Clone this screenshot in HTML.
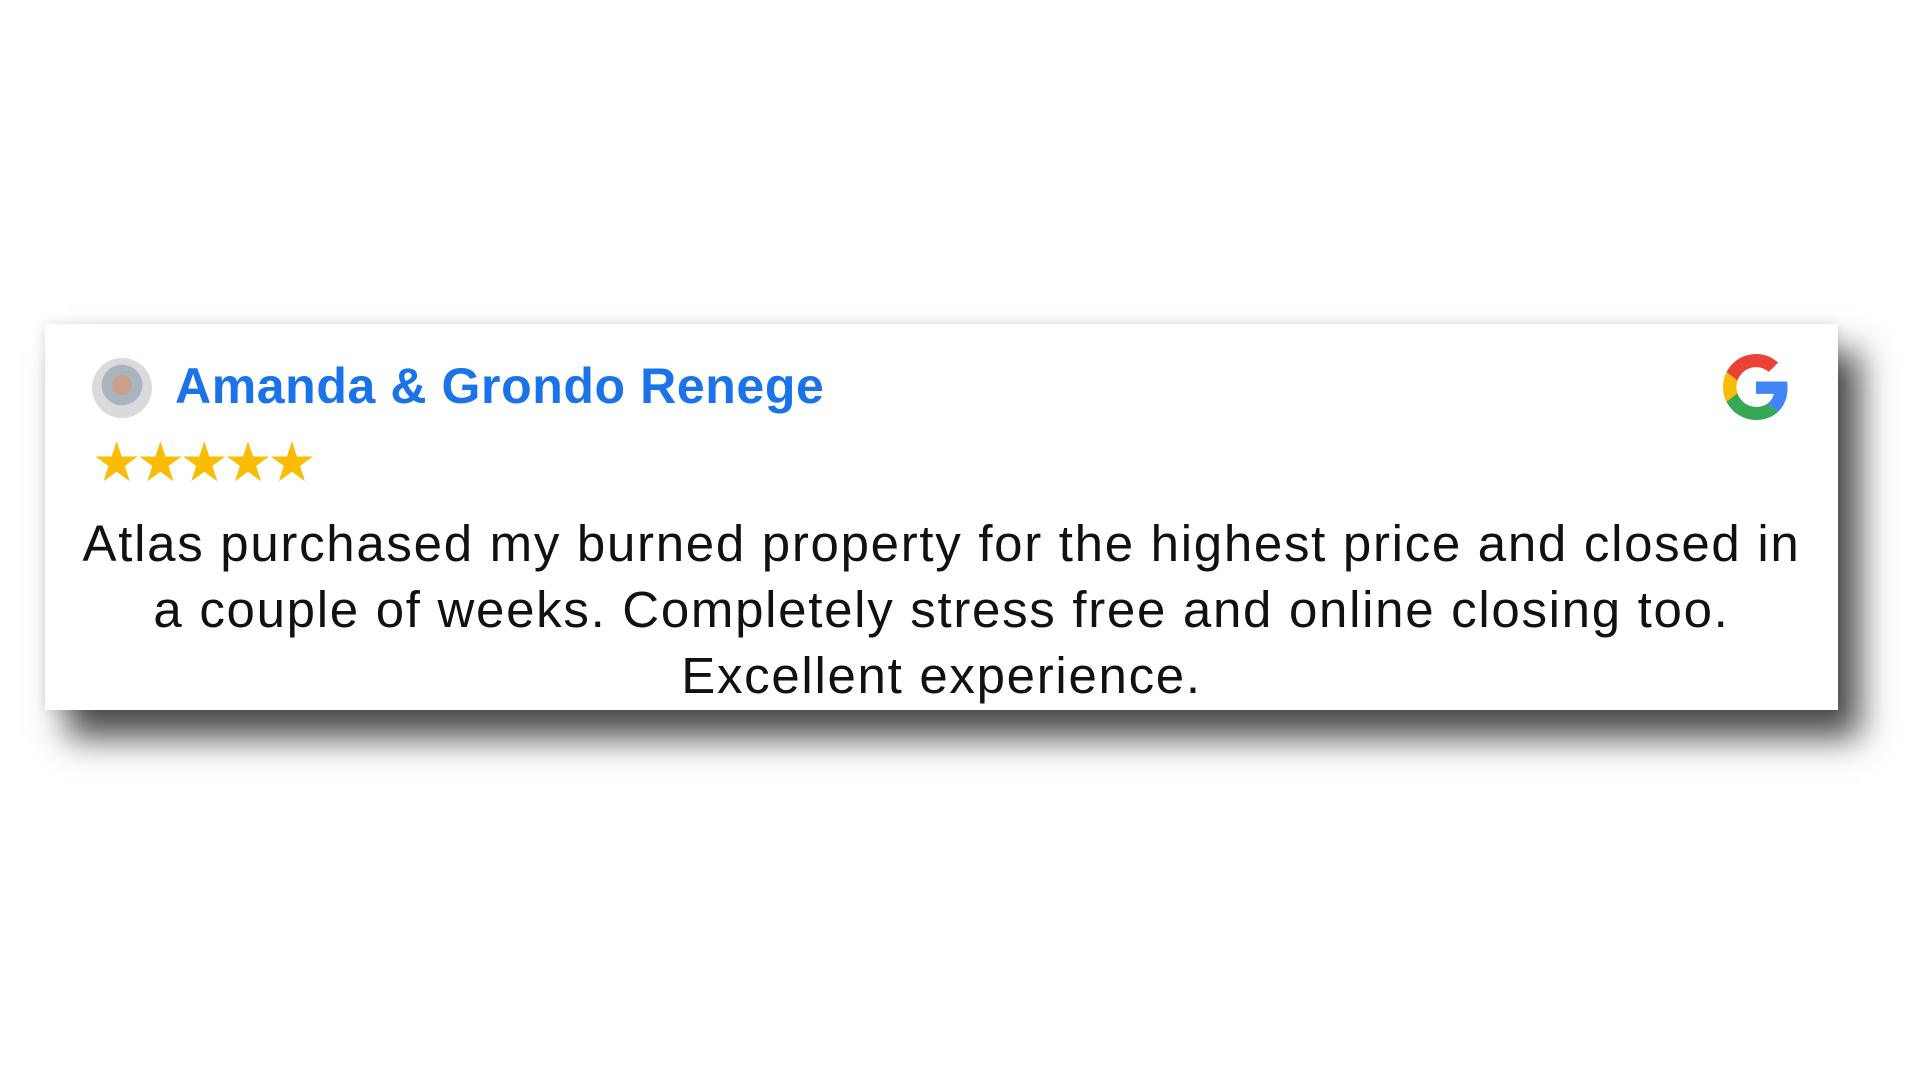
<!DOCTYPE html>
<html><head><meta charset="utf-8"><style>
html,body{margin:0;padding:0;background:#fff;width:1920px;height:1080px;overflow:hidden;font-family:"Liberation Sans",sans-serif}
.card{position:absolute;left:45px;top:324px;width:1793px;height:386px;background:#fff;box-shadow:22px 28px 32px rgba(0,0,0,.7),0 0 12px rgba(0,0,0,.12)}
.av{position:absolute;left:92px;top:358px;width:60px;height:60px;border-radius:50%;background:radial-gradient(circle at 50% 45%,#c9a08a 0 22%,#a9b4be 23% 45%,#d8dadc 46%);}
.name{position:absolute;left:175px;top:357px;font-size:50px;font-weight:bold;color:#1a73e8;white-space:nowrap;letter-spacing:0.6px}
.stars{position:absolute;left:92px;top:435px;font-size:55px;color:#fbbc05;letter-spacing:-5.5px;white-space:nowrap;line-height:1}
.ln{position:absolute;left:45px;width:1793px;text-align:center;font-size:51px;letter-spacing:1.7px;color:#111;white-space:nowrap;line-height:1}
</style></head><body>
<div class="card"></div>
<div class="av"></div>
<div class="name">Amanda &amp; Grondo Renege</div>
<div class="stars">★★★★★</div>
<svg style="position:absolute;left:1723px;top:354px" width="66" height="66" viewBox="0 0 48 48">
<path fill="#EA4335" d="M24 9.5c3.54 0 6.71 1.22 9.21 3.6l6.85-6.85C35.9 2.38 30.47 0 24 0 14.62 0 6.51 5.38 2.56 13.22l7.98 6.19C12.43 13.72 17.74 9.5 24 9.5z"/>
<path fill="#4285F4" d="M46.98 24.55c0-1.57-.15-3.09-.38-4.55H24v9.02h12.94c-.58 2.96-2.26 5.48-4.78 7.18l7.73 6c4.51-4.18 7.09-10.36 7.09-17.65z"/>
<path fill="#FBBC05" d="M10.53 28.59c-.48-1.45-.76-2.99-.76-4.59s.27-3.14.76-4.59l-7.98-6.19C.92 16.46 0 20.12 0 24c0 3.88.92 7.54 2.56 10.78l7.97-6.19z"/>
<path fill="#34A853" d="M24 48c6.48 0 11.93-2.13 15.89-5.81l-7.73-6c-2.15 1.45-4.92 2.3-8.16 2.3-6.26 0-11.57-4.22-13.47-9.91l-7.98 6.19C6.51 42.62 14.62 48 24 48z"/>
</svg>
<div class="ln" style="top:518px">Atlas purchased my burned property for the highest price and closed in</div>
<div class="ln" style="top:584px">a couple of weeks. Completely stress free and online closing too.</div>
<div class="ln" style="top:650px">Excellent experience.</div>
</body></html>
